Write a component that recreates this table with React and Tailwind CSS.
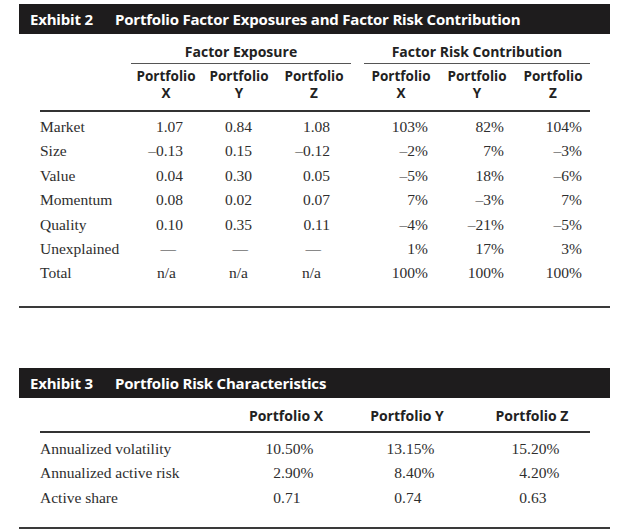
import React from "react";

const serif = { fontFamily: '"Liberation Serif", "Times New Roman", serif' };
const sans = { fontFamily: '"Open Sans", "Noto Sans", sans-serif' };

const factorRows = [
  ["Market", "1.07", "0.84", "1.08", "103%", "82%", "104%"],
  ["Size", "–0.13", "0.15", "–0.12", "–2%", "7%", "–3%"],
  ["Value", "0.04", "0.30", "0.05", "–5%", "18%", "–6%"],
  ["Momentum", "0.08", "0.02", "0.07", "7%", "–3%", "7%"],
  ["Quality", "0.10", "0.35", "0.11", "–4%", "–21%", "–5%"],
  ["Unexplained", "—", "—", "—", "1%", "17%", "3%"],
  ["Total", "n/a", "n/a", "n/a", "100%", "100%", "100%"],
];

// right padding per value column so numbers line up like the print
const pads = ["pr-[18px]", "pr-[25px]", "pr-[21px]", "pr-[10px]", "pr-[12px]", "pr-[8px]"];
const fixCells = ["pr-[25px]", "pr-[29px]", "pr-[30px]"];

const riskRows = [
  ["Annualized volatility", "10.50%", "13.15%", "15.20%"],
  ["Annualized active risk", "2.90%", "8.40%", "4.20%"],
  ["Active share", "0.71", "0.74", "0.63"],
];
const intWidths = ["w-[55px]", "w-[56px]", "w-[59px]"];

function Bar({ num, title }) {
  return (
    <div
      className="h-[30px] bg-[#1e1c1d] text-white flex items-center pl-[11px] text-[15px] font-bold tracking-[-0.2px]"
      style={sans}
    >
      <span className="w-[85px]">Exhibit {num}</span>
      <span>{title}</span>
    </div>
  );
}

function Decimal({ value, w }) {
  const i = value.indexOf(".");
  return (
    <div className="flex">
      <span className={`${w} text-right`}>{value.slice(0, i)}</span>
      <span>{value.slice(i)}</span>
    </div>
  );
}

export default function App() {
  const cols = "grid grid-cols-[91px_70px_76px_74px_13px_74px_78px_74px]";
  return (
    <div className="w-[630px] h-[529px] bg-white overflow-hidden pt-[4px] text-[#2e2e2e]">
      {/* Exhibit 2 */}
      <section className="ml-[19px] w-[591px] border-b-2 border-[#3a3a3a]">
        <Bar num="2" title="Portfolio Factor Exposures and Factor Risk Contribution" />
        <div className="pl-[21px] pr-[20px]">
          <div className={`${cols} pt-[11px] text-[14px] font-bold leading-[14px] text-[#222]`} style={sans}>
            <div />
            <div className="col-span-3 text-center pb-[4px] border-b border-[#555]">Factor Exposure</div>
            <div />
            <div className="col-span-3 text-center pb-[4px] border-b border-[#555]">Factor Risk Contribution</div>
          </div>
          <div
            className={`${cols} pt-[4px] pb-[8px] border-b-2 border-[#333] text-[13.5px] font-bold leading-[17px] text-[#222]`}
            style={sans}
          >
            <div />
            {["X", "Y", "Z"].map((l) => (
              <div key={"e" + l} className="text-center">
                <div>Portfolio</div>
                <div>{l}</div>
              </div>
            ))}
            <div />
            {["X", "Y", "Z"].map((l) => (
              <div key={"r" + l} className="text-center">
                <div>Portfolio</div>
                <div>{l}</div>
              </div>
            ))}
          </div>
          <div className="pt-[3px] pb-[20px] text-[15.5px]" style={serif}>
            {factorRows.map((r) => (
              <div key={r[0]} className={`${cols} leading-[24.4px]`}>
                <div className="whitespace-nowrap">{r[0]}</div>
                {r.slice(1, 4).map((v, i) =>
                  v === "—" || v === "n/a" ? (
                    <div key={i} className={`text-right ${fixCells[i]}`}>
                      {v}
                    </div>
                  ) : (
                    <div key={i} className={`text-right ${pads[i]}`}>
                      {v}
                    </div>
                  )
                )}
                <div />
                {r.slice(4).map((v, i) => (
                  <div key={i + 3} className={`text-right ${pads[i + 3]}`}>
                    {v}
                  </div>
                ))}
              </div>
            ))}
          </div>
        </div>
      </section>

      {/* Exhibit 3 */}
      <section className="ml-[19px] w-[591px] mt-[60px] border-b-2 border-[#3a3a3a]">
        <Bar num="3" title="Portfolio Risk Characteristics" />
        <div className="pl-[21px] pr-[20px]">
          <div
            className="grid grid-cols-[186px_120px_122px_122px] pt-[9px] pb-[6px] border-b-2 border-[#333] text-[14px] font-bold leading-[18px] text-[#222]"
            style={sans}
          >
            <div />
            <div className="text-center">Portfolio X</div>
            <div className="text-center">Portfolio Y</div>
            <div className="text-center pl-[6px]">Portfolio Z</div>
          </div>
          <div className="pt-[4px] pb-[17px] text-[15.5px]" style={serif}>
            {riskRows.map((r) => (
              <div key={r[0]} className="grid grid-cols-[186px_120px_122px_122px] leading-[24.5px]">
                <div>{r[0]}</div>
                {r.slice(1).map((v, i) => (
                  <Decimal key={i} value={v} w={intWidths[i]} />
                ))}
              </div>
            ))}
          </div>
        </div>
      </section>
    </div>
  );
}
